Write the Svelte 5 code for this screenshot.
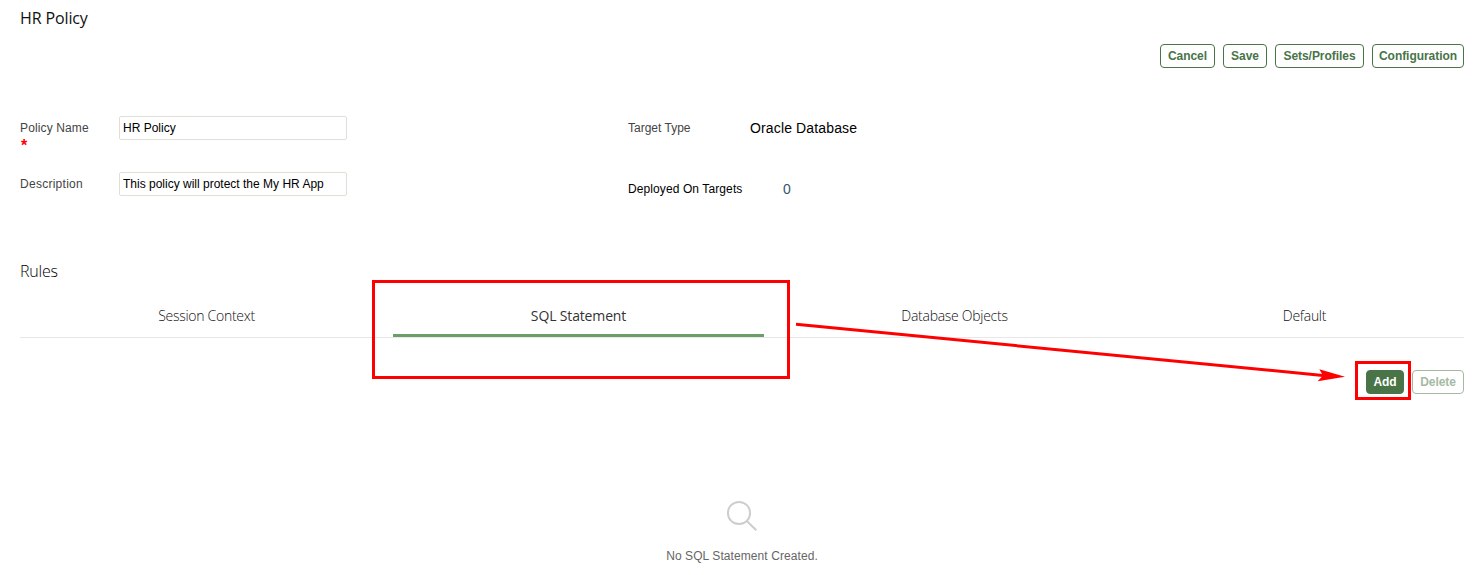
<script>
  const actions = [
    { label: 'Cancel', width: 55 },
    { label: 'Save', width: 44 },
    { label: 'Sets/Profiles', width: 89 },
    { label: 'Configuration', width: 92 }
  ];
  const tabs = ['Session Context', 'SQL Statement', 'Database Objects', 'Default'];
  let active = $state('SQL Statement');
  let policyName = $state('HR Policy');
  let description = $state('This policy will protect the My HR App');
</script>

<main class="page">
  <h1>HR Policy</h1>

  <div class="actions">
    {#each actions as action}
      <button class="btn" style:width="{action.width}px">{action.label}</button>
    {/each}
  </div>

  <section class="form">
    <div class="column">
      <div class="field">
        <label for="name"><span class="name">Policy Name</span><span class="required">*</span></label>
        <input id="name" bind:value={policyName} />
      </div>
      <div class="field">
        <label for="desc" class="wide">Description</label>
        <input id="desc" bind:value={description} />
      </div>
    </div>
    <div class="column">
      <div class="info">
        <span class="key muted">Target Type</span><span class="value">Oracle Database</span>
      </div>
      <div class="info deployed">
        <span class="key spaced">Deployed On Targets</span><span class="value count">0</span>
      </div>
    </div>
  </section>

  <h2>Rules</h2>

  <nav class="tabs">
    {#each tabs as tab}
      <button class="tab" class:active={tab === active} onclick={() => (active = tab)}>{tab}</button>
    {/each}
  </nav>

  <div class="toolbar">
    <button class="btn primary">Add</button>
    <button class="btn disabled" disabled>Delete</button>
  </div>

  <div class="empty">
    <svg width="32" height="32" viewBox="0 0 32 32" fill="none" stroke="#cdcdcd" stroke-width="2">
      <circle cx="13" cy="13" r="11.1" />
      <path d="M21 21.2 30.3 30.2" />
    </svg>
    <p>No SQL Statement Created.</p>
  </div>

  <svg class="annotation" width="1477" height="575" viewBox="0 0 1477 575">
    <rect x="373.5" y="281.5" width="415" height="96" />
    <rect x="1356.5" y="362.5" width="53" height="36" />
    <path d="M796 324.3 1323 375.4" />
    <polygon points="1319.3,369.2 1345,376.8 1317.7,381.2 1323,375.5" />
  </svg>
</main>

<style>
  :global(body) {
    background: #fff;
  }

  .page {
    position: relative;
    box-sizing: border-box;
    width: 1477px;
    height: 575px;
    padding: 0 13px 0 20px;
    overflow: hidden;
    background: #fff;
    font: 12px/14px 'Liberation Sans', Arial, sans-serif;
    color: #000;
  }

  h1,
  h2 {
    margin: 0;
    font-family: 'Open Sans', 'Noto Sans', sans-serif;
    font-size: 16px;
    line-height: 36px;
    height: 44px;
    font-weight: 400;
    letter-spacing: -0.12px;
    color: #111;
  }

  h2 {
    height: 43px;
    font-weight: 300;
    letter-spacing: -0.2px;
    color: #000;
  }

  button {
    padding: 0;
    font: inherit;
  }

  .actions,
  .toolbar {
    display: flex;
    justify-content: flex-end;
    gap: 8px;
    height: 72px;
  }

  .btn {
    box-sizing: border-box;
    height: 24px;
    border: 1px solid #487447;
    border-radius: 4px;
    background: #fff;
    color: #487447;
    font-weight: 700;
    letter-spacing: -0.05px;
    white-space: nowrap;
  }

  .form {
    display: grid;
    grid-template-columns: 608px 1fr;
    height: 137px;
  }

  .field {
    display: flex;
    height: 56px;
  }

  .field label {
    width: 99px;
    padding-top: 5px;
    color: #444;
  }

  .name {
    letter-spacing: 0.13px;
  }

  .field .wide {
    letter-spacing: 0.27px;
  }

  .required {
    display: block;
    height: 14px;
    padding-left: 1px;
    color: #f00;
    font: 700 16px/21px 'Liberation Sans', Arial, sans-serif;
  }

  .field input {
    box-sizing: border-box;
    width: 228px;
    height: 24px;
    padding: 0 3px;
    border: 1px solid #dfdfd3;
    border-radius: 2px;
    outline: none;
    background: #fff;
    font: inherit;
    color: #000;
  }

  .info {
    display: flex;
    align-items: center;
    height: 24px;
  }

  .deployed {
    margin-top: 37px;
  }

  .key {
    width: 122px;
  }

  .spaced {
    letter-spacing: 0.1px;
  }

  .muted {
    color: #444;
  }

  .value {
    font-size: 14px;
    letter-spacing: 0.14px;
  }

  .count {
    padding-left: 33px;
    color: #3a5566;
  }

  .tabs {
    display: grid;
    grid-template-columns: 373px 371px 381px 319px;
    height: 41px;
    border-bottom: 1px solid #e7e7e7;
  }

  .tab {
    padding-top: 2px;
    border: 0;
    border-bottom: 3px solid transparent;
    background: none;
    color: #111;
    font: 300 14px/20px 'Open Sans', 'Noto Sans', sans-serif;
    letter-spacing: -0.28px;
  }

  .tab.active {
    border-color: #6b9e69;
    color: #333;
    font-weight: 400;
    letter-spacing: -0.15px;
  }

  .toolbar {
    height: 130px;
    padding-top: 32px;
  }

  .primary {
    width: 38px;
    background: #487447;
    color: #fff;
  }

  .disabled {
    width: 52px;
    border-color: #a4baa3;
    color: #a4baa3;
  }

  .empty {
    display: flex;
    flex-direction: column;
    align-items: center;
  }

  p {
    margin: 17px 0 0;
    color: #666;
    letter-spacing: 0.08px;
  }

  .annotation {
    position: absolute;
    inset: 0;
    pointer-events: none;
    fill: none;
    stroke: #f00;
    stroke-width: 3;
  }

  .annotation polygon {
    fill: #f00;
    stroke: none;
  }
</style>
